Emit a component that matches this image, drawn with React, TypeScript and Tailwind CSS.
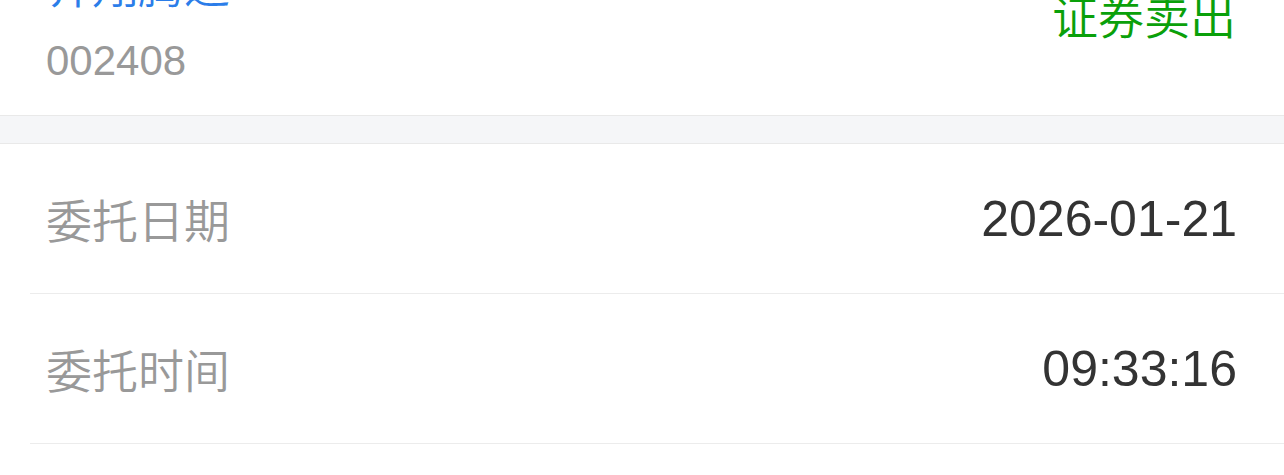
import React from "react";

const font = { fontFamily: '"Liberation Sans", "Noto Sans CJK SC", sans-serif' };
const cjk = { fontFamily: '"Noto Sans CJK SC", sans-serif' };

export default function App() {
  return (
    <div className="w-[1284px] h-[475px] overflow-hidden bg-white" style={font}>
      <div className="h-[116px] border-b border-[#e9e9e9] flex justify-between pl-[46px] pr-[48px] overflow-hidden">
        <div className="flex flex-col">
          <div className="mt-[-40px] h-[46px] text-[46px] leading-[46px] text-[#2b7de9] whitespace-nowrap font-[350]" style={cjk}>齐翔腾达</div>
          <div className="mt-[34px] h-[42px] text-[42px] leading-[42px] text-[#999999]">002408</div>
        </div>
        <div className="mt-[-9px] h-[46px] text-[46px] leading-[46px] text-[#0aa00a] whitespace-nowrap font-[350]" style={cjk}>证券卖出</div>
      </div>
      <div className="h-[28px] bg-[#f5f6f8] border-b border-[#e9e9e9]" />
      <div className="ml-[30px] h-[150px] border-b border-[#ececec] flex items-center justify-between pl-[16px] pr-[47px]">
        <span className="text-[46px] text-[#999999] leading-none font-[350] mb-[2px]" style={cjk}>委托日期</span>
        <span className="text-[50px] text-[#333333] leading-none">2026-01-21</span>
      </div>
      <div className="ml-[30px] h-[150px] border-b border-[#ececec] flex items-center justify-between pl-[16px] pr-[47px]">
        <span className="text-[46px] text-[#999999] leading-none font-[350] mb-[2px]" style={cjk}>委托时间</span>
        <span className="text-[50px] text-[#333333] leading-none">09:33:16</span>
      </div>
    </div>
  );
}
